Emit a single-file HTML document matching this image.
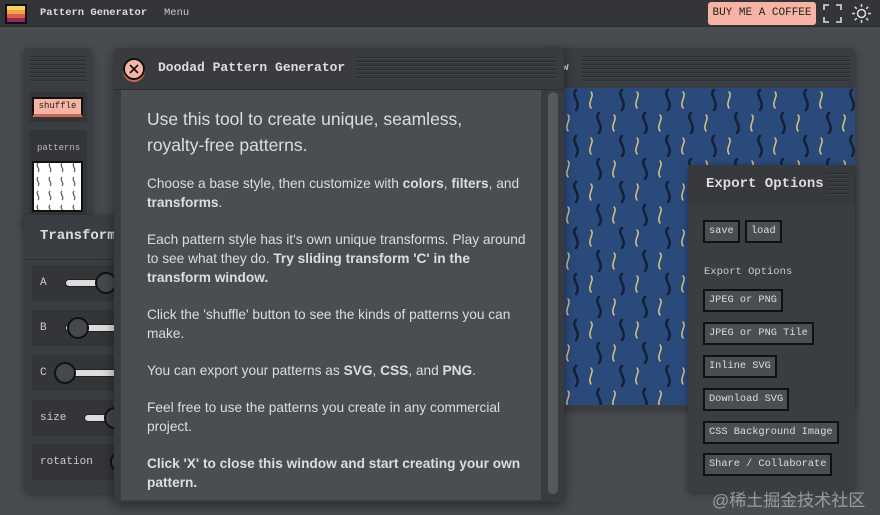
<!DOCTYPE html>
<html><head><style>
*{box-sizing:border-box;margin:0;padding:0}
body{width:880px;height:515px;background:#484b50;position:relative;overflow:hidden;font-family:"Liberation Mono",monospace;color:#ddd}
.top{position:absolute;left:0;top:0;width:880px;height:27px;background:#333538;border-bottom:1px solid #2a2c2f}
.abs{position:absolute}
.lines{background:repeating-linear-gradient(#2b2d30 0 1px,#3f4246 1px 2px,#37393d 2px 4px)}
.panel{background:#3a3d41;box-shadow:0 2px 8px rgba(0,0,0,.35);border-radius:4px}
.btn{position:absolute;border:2px solid #111;background:#4a4d52;color:#ddd;font-size:10.3px;padding:3px 4px;line-height:13px;white-space:nowrap}
.row{position:absolute;left:32px;width:90px;height:36px;background:#333538;font-size:11px;color:#ccc}
.row span{position:absolute;left:8px;top:12px}
.track{position:absolute;height:8px;background:#ddd;border:1px solid #222;border-radius:4px;top:14px}
.knob{position:absolute;width:22px;height:22px;border-radius:50%;background:#45484c;border:2px solid #111;top:7px}
.modal p{font-family:"Liberation Sans",sans-serif;font-size:13.7px;line-height:19px;color:#ddd;margin-bottom:18px}
</style></head><body>
<div class="top">
 <div class="abs" style="left:5px;top:4px;width:22px;height:20px;border:2px solid #111;background:linear-gradient(#f4d35e 0 25%,#f3a04c 25% 50%,#e05a47 50% 75%,#8a2e5c 75%)"></div>
 <div class="abs" style="left:40px;top:7px;font-size:10.5px;font-weight:bold;color:#ddd">Pattern Generator</div>
 <div class="abs" style="left:164px;top:7px;font-size:10.5px;color:#ccc">Menu</div>
 <div class="abs" style="left:708px;top:2px;width:108px;height:23px;background:#f7b3a3;border-radius:3px;color:#222;font-size:11px;line-height:23px;text-align:center">BUY ME A COFFEE</div>
 <svg class="abs" style="left:823px;top:4px" width="19" height="19" viewBox="0 0 19 19" fill="none" stroke="#ddd" stroke-width="1.6"><path d="M1 6V1h5M13 1h5v5M18 13v5h-5M6 18H1v-5"/></svg>
 <svg class="abs" style="left:851px;top:3px" width="21" height="21" viewBox="0 0 21 21" fill="none" stroke="#ddd" stroke-width="1.5"><circle cx="10.5" cy="10.5" r="4"/><path d="M10.5 1v3M10.5 17v3M1 10.5h3M17 10.5h3M3.8 3.8l2 2M15.2 15.2l2 2M3.8 17.2l2-2M15.2 5.8l2-2"/></svg>
</div>

<div class="abs panel" style="left:24px;top:48px;width:68px;height:180px">
 <div class="abs lines" style="left:6px;top:8px;width:56px;height:26px"></div>
 <div class="abs" style="left:5px;top:44px;width:58px;height:30px;background:#333538"></div>
 <div class="abs" style="left:8px;top:49px;width:51px;height:20px;background:#f7b3a3;border:2px solid #111;border-bottom:3px solid #c96a55;color:#222;font-size:9px;text-align:center;line-height:15px">shuffle</div>
 <div class="abs" style="left:5px;top:82px;width:58px;height:90px;background:#333538"></div>
 <div class="abs" style="left:13px;top:95px;font-size:9px;color:#bbb">patterns</div>
 <svg class="abs" style="left:8px;top:113px" width="51" height="51"><defs><pattern id="q" width="12" height="14" patternUnits="userSpaceOnUse"><rect width="12" height="14" fill="#fff"/><path d="M6 2c-3 3 3 6 0 9" stroke="#555" stroke-width="1.2" fill="none"/></pattern></defs><rect width="51" height="51" fill="url(#q)" stroke="#111" stroke-width="4"/></svg>
</div>

<div class="abs panel" style="left:24px;top:215px;width:110px;height:278px">
 <div class="abs" style="left:16px;top:13px;font-size:14px;font-weight:bold;color:#ddd">Transforms</div>
 <div class="abs" style="left:0;top:44px;width:110px;height:1px;background:#2c2e31"></div>
</div>
<div class="row" style="top:265px"><span>A</span><div class="track" style="left:33px;width:50px"></div><div class="knob" style="left:63px"></div></div>
<div class="row" style="top:310px"><span>B</span><div class="track" style="left:33px;width:60px"></div><div class="knob" style="left:35px"></div></div>
<div class="row" style="top:355px"><span>C</span><div class="track" style="left:25px;width:70px"></div><div class="knob" style="left:22px"></div></div>
<div class="row" style="top:400px"><span>size</span><div class="track" style="left:52px;width:40px"></div><div class="knob" style="left:72px"></div></div>
<div class="row" style="top:444px"><span>rotation</span><div class="knob" style="left:78px"></div></div>

<div class="abs panel" style="left:540px;top:48px;width:315px;height:360px">
 <div class="abs" style="left:22px;top:14px;font-size:11px;font-weight:bold">w</div>
 <div class="abs lines" style="left:42px;top:8px;width:268px;height:26px"></div>
 <svg class="abs" style="left:23px;top:40px" width="292" height="317">
  <defs><pattern id="p" width="46" height="46" patternUnits="userSpaceOnUse">
   <rect width="46" height="46" fill="#2b4a7c"/>
   <path d="M13 2c-6 5 6 12 0 20" stroke="#142238" stroke-width="2.6" fill="none" stroke-linecap="round"/>
   <path d="M28 4c4 4-4 10 0 16" stroke="#d8c27a" stroke-width="1.5" fill="none" stroke-linecap="round"/>
   <path d="M36 25c-6 5 6 12 0 20" stroke="#142238" stroke-width="2.6" fill="none" stroke-linecap="round"/>
   <path d="M5 27c4 4-4 10 0 16" stroke="#d8c27a" stroke-width="1.5" fill="none" stroke-linecap="round"/>
  </pattern></defs>
  <rect width="292" height="317" fill="url(#p)"/>
 </svg>
</div>

<div class="abs panel" style="left:688px;top:165px;width:167px;height:327px;background:#3a3d41">
 <div class="abs" style="left:0;top:0;width:167px;height:40px;background:#37393d"></div>
 <div class="abs" style="left:18px;top:11px;font-size:14px;font-weight:bold">Export Options</div>
 <div class="abs lines" style="left:139px;top:8px;width:22px;height:22px"></div>
 <div class="abs" style="left:16px;top:101px;font-size:10.5px;color:#ccc">Export Options</div>
</div>
<div class="btn" style="left:703px;top:220px">save</div>
<div class="btn" style="left:745px;top:220px">load</div>
<div class="btn" style="left:703px;top:289px">JPEG or PNG</div>
<div class="btn" style="left:703px;top:322px">JPEG or PNG Tile</div>
<div class="btn" style="left:703px;top:355px">Inline SVG</div>
<div class="btn" style="left:703px;top:388px">Download SVG</div>
<div class="btn" style="left:703px;top:421px">CSS Background Image</div>
<div class="btn" style="left:703px;top:453px">Share / Collaborate</div>
<div class="abs" style="left:712px;top:486px;font-family:'Liberation Sans','Noto Sans CJK SC',sans-serif;font-size:17px;color:rgba(255,255,255,.45)">@稀土掘金技术社区</div>

<div class="abs modal" style="left:114px;top:48px;width:450px;height:454px;background:#393b3f;box-shadow:0 4px 12px rgba(0,0,0,.45);border-radius:4px">
 <div class="abs" style="left:9px;top:10px;width:22px;height:22px;border-radius:50%;background:#f7b3a3;border:2px solid #111;box-shadow:0 2px 0 #c96a55"></div>
 <svg class="abs" style="left:13px;top:14px" width="14" height="14"><path d="M3 3l8 8M11 3l-8 8" stroke="#111" stroke-width="1.6"/></svg>
 <div class="abs" style="left:44px;top:12px;font-size:13px;font-weight:bold;color:#ddd">Doodad Pattern Generator</div>
 <div class="abs lines" style="left:243px;top:9px;width:200px;height:22px"></div>
 <div class="abs" style="left:0;top:41px;width:450px;height:1px;background:#2c2e31"></div>
 <div class="abs" style="left:7px;top:42px;width:420px;height:410px;background:#4a4d52;padding:16px 8px 16px 26px">
  <p style="font-size:17.5px;line-height:26px;margin-bottom:16px;padding-right:60px">Use this tool to create unique, seamless, royalty-free patterns.</p>
  <p>Choose a base style, then customize with <b>colors</b>, <b>filters</b>, and <b>transforms</b>.</p>
  <p>Each pattern style has it's own unique transforms. Play around to see what they do. <b>Try sliding transform 'C' in the transform window.</b></p>
  <p>Click the 'shuffle' button to see the kinds of patterns you can make.</p>
  <p>You can export your patterns as <b>SVG</b>, <b>CSS</b>, and <b>PNG</b>.</p>
  <p style="padding-right:20px">Feel free to use the patterns you create in any commercial project.</p>
  <p><b>Click 'X' to close this window and start creating your own pattern.</b></p>
 </div>
 <div class="abs" style="left:434px;top:44px;width:10px;height:402px;background:#55585d;border-radius:5px"></div>
</div>
</body></html>
